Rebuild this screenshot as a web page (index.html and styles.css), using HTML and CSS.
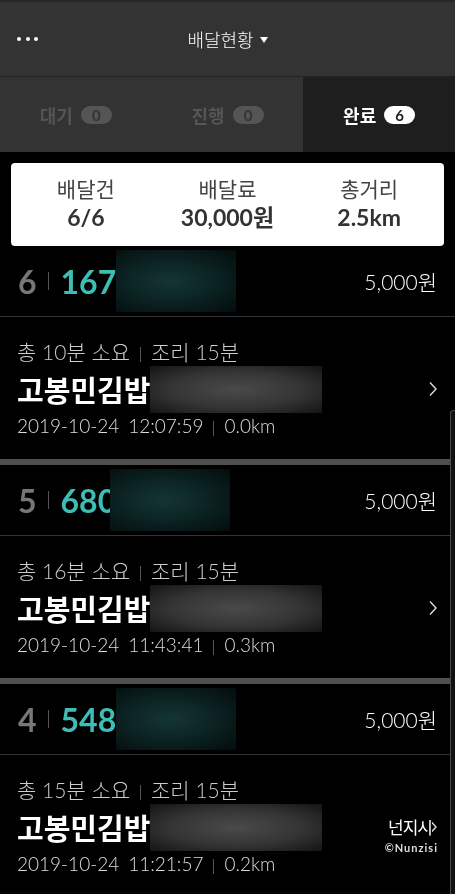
FILE: index.html
```html
<!DOCTYPE html>
<html lang="ko">
<head>
  <meta charset="UTF-8" />
  <meta name="viewport" content="width=device-width, initial-scale=1.0"/>
  <title>배달현황</title>
  <link rel="stylesheet" href="styles.css">
</head>
<body>
  <div class="app">

    <header class="topbar">
      <div class="dots"><span></span><span></span><span></span></div>
      <div class="title">배달현황 <span class="caret"></span></div>
    </header>

    <nav class="tabs">
      <div class="tab">대기 <span class="badge">0</span></div>
      <div class="tab">진행 <span class="badge">0</span></div>
      <div class="tab active">완료 <span class="badge">6</span></div>
    </nav>

    <section class="summary">
      <div class="card">
        <div class="stat"><span class="stat-label">배달건</span><strong>6/6</strong></div>
        <div class="stat"><span class="stat-label">배달료</span><strong>30,000원</strong></div>
        <div class="stat"><span class="stat-label">총거리</span><strong>2.5km</strong></div>
      </div>
    </section>

    <ul class="orders">
      <li class="order">
        <div class="order-head">
          <span class="seq">6</span><span class="bar"></span>
          <span class="code">167</span><span class="mask-code"></span>
          <span class="fee">5,000원</span>
        </div>
        <div class="order-body">
          <div class="time">총 10분 소요<span class="bar small"></span>조리 15분</div>
          <div class="name-row">
            <span class="name">고봉민김밥</span><span class="mask-name"></span>
            <svg class="chev" width="10" height="16" viewBox="0 0 10 16"><path d="M2 1.5 L8 8 L2 14.5" fill="none" stroke="#ddd" stroke-width="1.4"/></svg>
          </div>
          <div class="meta">2019-10-24<span class="clock">12:07:59</span><span class="bar small"></span>0.0km</div>
        </div>
      </li>
      <li class="order">
        <div class="order-head">
          <span class="seq">5</span><span class="bar"></span>
          <span class="code">680</span><span class="mask-code tight"></span>
          <span class="fee">5,000원</span>
        </div>
        <div class="order-body">
          <div class="time">총 16분 소요<span class="bar small"></span>조리 15분</div>
          <div class="name-row">
            <span class="name">고봉민김밥</span><span class="mask-name"></span>
            <svg class="chev" width="10" height="16" viewBox="0 0 10 16"><path d="M2 1.5 L8 8 L2 14.5" fill="none" stroke="#ddd" stroke-width="1.4"/></svg>
          </div>
          <div class="meta">2019-10-24<span class="clock">11:43:41</span><span class="bar small"></span>0.3km</div>
        </div>
      </li>
      <li class="order">
        <div class="order-head">
          <span class="seq">4</span><span class="bar"></span>
          <span class="code">548</span><span class="mask-code"></span>
          <span class="fee">5,000원</span>
        </div>
        <div class="order-body">
          <div class="time">총 15분 소요<span class="bar small"></span>조리 15분</div>
          <div class="name-row">
            <span class="name">고봉민김밥</span><span class="mask-name"></span>
            <svg class="chev" width="10" height="16" viewBox="0 0 10 16"><path d="M2 1.5 L8 8 L2 14.5" fill="none" stroke="#ddd" stroke-width="1.4"/></svg>
          </div>
          <div class="meta">2019-10-24<span class="clock">11:21:57</span><span class="bar small"></span>0.2km</div>
        </div>
      </li>
    </ul>

    <div class="scroll-edge"></div>
    <div class="watermark"><span class="wm-title">넌지시</span><span class="wm-copy">©Nunzisi</span></div>
  </div>
</body>
</html>
```

FILE: styles.css
```css
body {
  margin: 0;
  background: #000;
  color: #fff;
  font-family: Lato, "Noto Sans CJK KR", sans-serif;
}
.app {
  position: relative;
  width: 455px;
  height: 894px;
  overflow: hidden;
  background: #000;
  will-change: transform;
}

/* top bar */
.topbar {
  height: 74px;
  background: #333;
  border-top: 2px solid #262626;
  border-bottom: 1px solid #222;
  display: flex;
  align-items: center;
  justify-content: center;
  position: relative;
}
.dots {
  position: absolute;
  left: 17px;
  top: 35px;
  display: flex;
  gap: 4.5px;
}
.dots span {
  width: 4px;
  height: 4px;
  border-radius: 50%;
  background: #fff;
}
.title {
  font-size: 18px;
  font-weight: 300;
  display: flex;
  align-items: center;
  gap: 6px;
}
.caret {
  width: 0;
  height: 0;
  border-left: 4.5px solid transparent;
  border-right: 4.5px solid transparent;
  border-top: 6px solid #fff;
  margin-top: 2px;
}

/* tabs */
.tabs {
  display: grid;
  grid-template-columns: 1fr 1fr 1fr;
  height: 75px;
  background: #333;
}
.tab {
  display: flex;
  align-items: center;
  justify-content: center;
  gap: 8px;
  font-size: 18px;
  font-weight: 700;
  color: #555;
  padding-top: 1px;
}
.tab .badge {
  display: inline-flex;
  align-items: center;
  justify-content: center;
  width: 31px;
  height: 18px;
  border-radius: 9px;
  background: #555;
  color: #333;
  font-size: 15px;
  font-weight: 700;
}
.tab.active {
  background: #1e1e1e;
  color: #fff;
}
.tab.active .badge {
  background: #fff;
  color: #1e1e1e;
}

/* summary */
.summary {
  padding: 11px 11px 0;
}
.card {
  background: #fff;
  border-radius: 4px;
  height: 83px;
  display: grid;
  grid-template-columns: 1fr 1fr 1fr;
  padding: 0 4px;
}
.stat {
  display: flex;
  flex-direction: column;
  align-items: center;
  justify-content: center;
  color: #333;
  padding-bottom: 2px;
}
.stat-label {
  font-size: 21px;
  color: #444;
  line-height: 26px;
}
.stat strong {
  font-size: 23px;
  font-weight: 700;
  line-height: 30px;
}

/* orders */
.orders {
  list-style: none;
  margin: 0;
  padding: 0;
}
.order {
  border-bottom: 6px solid #4f4f4f;
}
.order-head {
  height: 70px;
  display: flex;
  align-items: center;
  padding: 0 18px;
  border-bottom: 1px solid #333;
}
.seq {
  font-size: 32px;
  font-weight: 700;
  color: #777;
}
.bar {
  width: 1px;
  height: 18px;
  background: #555;
  margin: 0 12px 0 11px;
}
.bar.small {
  height: 15px;
  margin: 0 10px;
  display: inline-block;
  vertical-align: middle;
}
.code {
  font-size: 32px;
  font-weight: 700;
  color: #3cbdb6;
}
.mask-code {
  width: 120px;
  height: 62px;
  background: radial-gradient(ellipse at 45% 50%, #143534 0%, #0c2424 45%, #040c0c 100%);
}
.mask-code.tight {
  margin-left: -6px;
}
.fee {
  margin-left: auto;
  font-size: 21px;
  font-weight: 300;
  color: #fff;
}

.order-body {
  height: 142px;
  padding: 23px 17px 0 17px;
  box-sizing: border-box;
}
.time {
  font-size: 21px;
  font-weight: 300;
  line-height: 24px;
  color: #ccc;
}
.name-row {
  height: 36px;
  margin-top: 7px;
  display: flex;
  align-items: center;
}
.name {
  font-size: 29px;
  font-weight: 700;
  color: #fff;
}
.mask-name {
  width: 172px;
  height: 47px;
  background: radial-gradient(ellipse at 50% 50%, #4a4a4a 0%, #343434 55%, #141414 100%);
}
.chev {
  margin-left: auto;
}
.meta {
  margin-top: 7px;
  font-size: 19px;
  font-weight: 300;
  line-height: 24px;
  color: #ddd;
}
.clock {
  margin-left: 9px;
}

/* overlays */
.scroll-edge {
  position: absolute;
  right: 0;
  top: 410px;
  bottom: 0;
  width: 4px;
  border-left: 1px solid #4a4a52;
  border-top: 1px solid #4a4a52;
  border-top-left-radius: 4px;
  background: #111;
}
.watermark {
  position: absolute;
  right: 17px;
  top: 817px;
  display: flex;
  flex-direction: column;
  align-items: flex-end;
}
.wm-title {
  font-size: 17px;
  line-height: 22px;
  margin-right: 6px;
  letter-spacing: -1px;
  background: #000;
}
.wm-copy {
  font-size: 11px;
  font-weight: 700;
  letter-spacing: 1px;
  color: #ddd;
  margin-top: 2px;
}
```
